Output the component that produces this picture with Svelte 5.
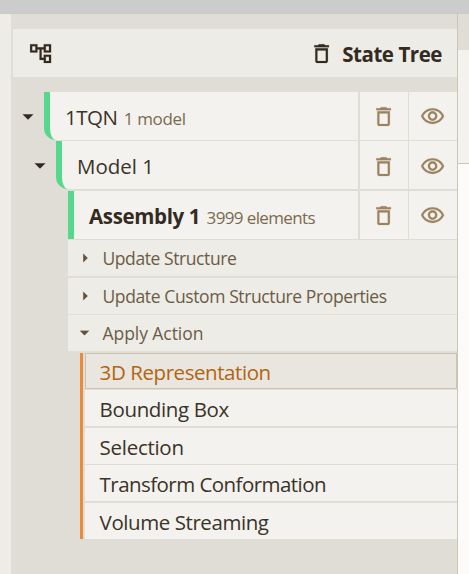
<script>
  const nodes = [
    { name: '1TQN', note: '1 model', depth: 0, open: true, gap: 1, nameSpacing: -0.5, noteSpacing: -0.35 },
    { name: 'Model 1', note: '', depth: 1, open: true, gap: 2, nameSpacing: 0, noteSpacing: 0 },
    { name: 'Assembly 1', note: '3999 elements', depth: 2, open: false, gap: 1, nameSpacing: -0.35, noteSpacing: -0.62 }
  ];
  const sections = [
    { label: 'Update Structure', open: false, gap: 2, spacing: -0.42 },
    { label: 'Update Custom Structure Properties', open: false, gap: 1, spacing: -0.39 },
    { label: 'Apply Action', open: true, gap: 2, spacing: -0.06 }
  ];
  const actions = [
    { label: '3D Representation', gap: 1, spacing: -0.43 },
    { label: 'Bounding Box', gap: 2, spacing: -0.37 },
    { label: 'Selection', gap: 1, spacing: -0.28 },
    { label: 'Transform Conformation', gap: 2, spacing: -0.55 },
    { label: 'Volume Streaming', gap: 0, spacing: -0.43 }
  ];
</script>

{#snippet trash()}
  <svg class="icon" viewBox="0 0 24 24"><path d="M6 19c0 1.100.9 2 2 2h8c1.100 0 2-.9 2-2V7H6v12zM8 9h8v10H8V9zm7.500-5l-1-1h-5l-1 1H5v2h14V4h-3.500z" /></svg>
{/snippet}

{#snippet eye()}
  <svg class="icon" viewBox="0 0 24 24"><path d="M12 6c3.790 0 7.170 2.130 8.820 5.500C19.170 14.870 15.790 17 12 17s-7.170-2.130-8.820-5.500C4.830 8.130 8.210 6 12 6m0-2C7 4 2.730 7.110 1 11.500 2.730 15.890 7 19 12 19s9.270-3.110 11-7.500C21.270 7.110 17 4 12 4zm0 5c1.380 0 2.500 1.120 2.500 2.500S13.380 14 12 14s-2.500-1.120-2.500-2.500S10.620 9 12 9m0-2c-2.480 0-4.500 2.020-4.500 4.500S9.520 16 12 16s4.500-2.020 4.500-4.500S14.480 7 12 7z" /></svg>
{/snippet}

<div class="page">
  <div class="topbar"></div>
  <div class="body">
    <div class="strip"></div>
    <main>
      <header>
        <svg class="icon tree-icon" viewBox="0 0 24 24"><path d="M22 11V3h-7v3H9V3H2v8h7V8h2v10h4v3h7v-8h-7v3h-2V8h2v3h7zM7 9H4V5h3v4zm10 6h3v4h-3v-4zm0-10h3v4h-3V5z" /></svg>
        <div class="title">{@render trash()}<span>State Tree</span></div>
      </header>
      <div class="tree">
        {#each nodes as node}
          <div class="node" style="padding-left: {node.depth * 12}px; margin-bottom: {node.gap}px">
            <div class="toggle">
              {#if node.open}<svg width="12" height="6" viewBox="0 0 12 6"><path d="M0.500 0.300h11L6 5.700z" /></svg>{/if}
            </div>
            <div class="label" class:rounded={node.open} class:current={!node.open}>
              <span class="name" style="letter-spacing: {node.nameSpacing}px">{node.name}</span>
              {#if node.note}<small style="letter-spacing: {node.noteSpacing}px">{node.note}</small>{/if}
            </div>
            <div class="button del" class:lower={node.depth === 1}>{@render trash()}</div>
            <div class="button" class:lower={node.depth === 1}>{@render eye()}</div>
          </div>
        {/each}
      </div>
      <div class="controls">
        {#each sections as section}
          <div class="section" style="margin-bottom: {section.gap}px; letter-spacing: {section.spacing}px">
            <svg class:open={section.open} width="5" height="10" viewBox="0 0 5 10"><path d="M0.200 0.500L4.800 5 0.200 9.500z" /></svg>
            <span>{section.label}</span>
          </div>
        {/each}
        <div class="actions">
          {#each actions as action, i}
            <div class="action" class:hover={i === 0} style="margin-bottom: {action.gap}px; letter-spacing: {action.spacing}px">{action.label}</div>
          {/each}
        </div>
      </div>
    </main>
    <aside><div class="aside-head"></div><div class="aside-body"></div></aside>
  </div>
</div>

<style>
  .page {
    width: 469px; height: 574px; overflow: hidden; display: flex; flex-direction: column;
    font-family: "Open Sans", "Noto Sans", sans-serif; font-size: 20.500px; color: #332b1f; background: #dfddd5;
  }
  .topbar { height: 13px; flex: none; background: #ccc; border-bottom: 1px solid #cbc9c0; }
  .body { flex: 1; display: flex; }
  .strip { width: 11px; background: #edece7; }
  main { width: 446px; box-sizing: border-box; padding-top: 15px; }
  aside { width: 11px; border-left: 1px solid #cbc7b8; background: #fcfbf9; }
  .aside-head { height: 36px; background: #dfddd5; }
  .aside-body { height: 113px; background: #f3f2ee; border-bottom: 1px solid #cbc7b8; }
  header { margin-left: 2px; height: 48px; background: #edece7; display: flex; align-items: center; justify-content: space-between; box-sizing: border-box; padding: 0 15px; }
  .icon { width: 25.200px; height: 25.200px; fill: currentColor; stroke: currentColor; stroke-width: 0.150; display: block; }
  .tree-icon { margin-top: 2px; }
  .title { display: flex; align-items: center; font-weight: 700; gap: 8px; line-height: 48px; letter-spacing: -0.45px; }
  .title .icon { margin-top: 1px; }
  .title span { padding-top: 3px; line-height: 45px; }
  .tree { padding-top: 15px; }
  .node { display: flex; height: 48px; }
  .toggle { width: 33px; display: flex; align-items: center; justify-content: center; padding-top: 2px; box-sizing: border-box; }
  .toggle svg { fill: #332b1f; }
  .label { flex: 1; border-left: 6px solid #55d88c; background: #f3f2ee; padding-left: 15px; line-height: 51px; white-space: nowrap; }
  .rounded { border-bottom-left-radius: 12px; }
  .name { color: #3b3327; }
  .current .name { font-weight: 700; color: #332b1f; }
  small { font-size: 17px; color: #7b6a50; margin-left: 1px; }
  .button { width: 48px; display: flex; align-items: center; justify-content: center; background: #f3f2ee; color: #9c835f; margin-left: 1px; box-sizing: border-box; padding-top: 2px; }
  .button.lower { padding-top: 4px; }
  .del { margin-left: 2px; padding-right: 1px; }
  .controls { margin-left: 57px; }
  .section { height: 36px; background: #edece7; color: #6b5c45; font-size: 17.500px; line-height: 37px; display: flex; align-items: center; padding-left: 15px; white-space: nowrap; }
  .section svg { fill: #63533c; margin-right: 14.500px; }
  .section svg.open { transform: translateX(-1px) rotate(90deg) scale(1.100); }
  .actions { margin-left: 12px; border-left: 3px solid #e98b39; padding-left: 2px; }
  .action { height: 36px; box-sizing: border-box; background: #f3f2ee; color: #3b3327; padding-left: 14.600px; line-height: 38px; white-space: nowrap; }
  .hover { background: #e9e6df; color: #b2640f; border: 1px solid #cbc4b2; padding-left: 13.600px; line-height: 36px; }
</style>
